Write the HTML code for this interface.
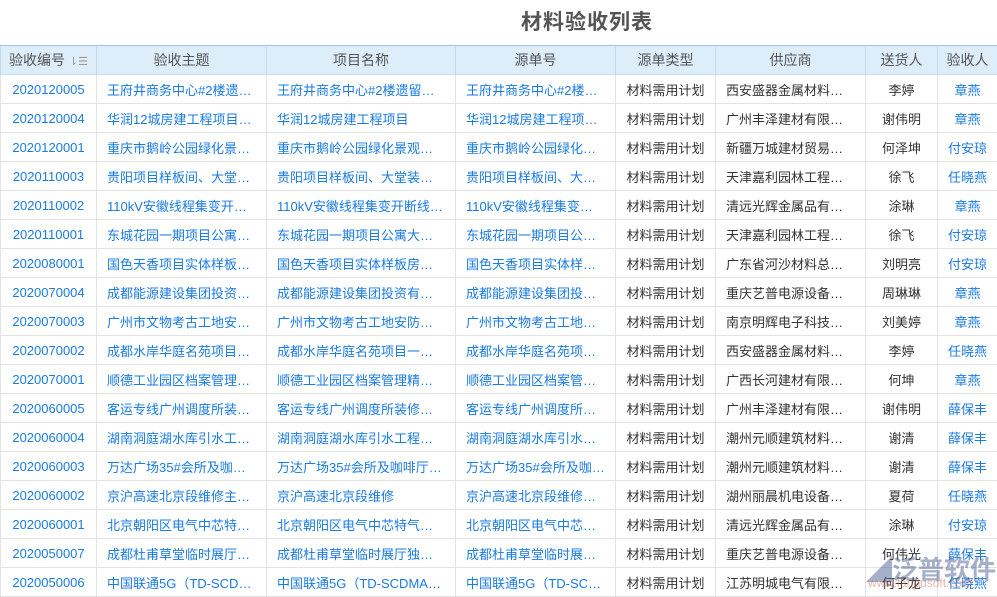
<!DOCTYPE html>
<html><head><meta charset="utf-8"><style>
body{margin:0;width:997px;height:595px;overflow:hidden;background:#fff;font-family:"Liberation Sans","Noto Sans CJK SC",sans-serif;position:relative}
.t{position:absolute;left:0;width:1174px;top:6px;text-align:center;font-size:21px;font-weight:bold;color:#555;letter-spacing:1px}
table{position:absolute;left:0;top:45px;border-collapse:collapse;table-layout:fixed;width:997px;font-size:13px}
th{background:#ddedfa;color:#555;font-weight:normal;font-size:14px;height:28px;border:1px solid #c4daee;border-top:1px solid #9cc5e8;padding:0}
td{height:28px;border:1px solid #e3e3e3;padding:0 10px;white-space:nowrap;overflow:hidden;text-overflow:ellipsis;color:#1a7be0}
td.c{text-align:center;padding:0}
td.k{color:#333}
.wm{position:absolute;left:866px;top:550px;font-size:26px;font-weight:bold;color:rgba(60,80,140,.45);white-space:nowrap}
.wm2{position:absolute;left:868px;top:576px;font-size:12px;color:rgba(200,90,60,.45);white-space:nowrap}
</style></head><body>
<div class="t">材料验收列表</div>
<table>
<colgroup><col style="width:96px"><col style="width:170px"><col style="width:189px"><col style="width:160px"><col style="width:100px"><col style="width:150px"><col style="width:72px"><col style="width:60px"></colgroup>
<tr><th>验收编号 <span style="color:#999;font-size:11px">⇂☰</span></th><th>验收主题</th><th>项目名称</th><th>源单号</th><th>源单类型</th><th>供应商</th><th>送货人</th><th>验收人</th></tr>
<tr><td class="c">2020120005</td><td>王府井商务中心#2楼遗留问题</td><td>王府井商务中心#2楼遗留问题处理</td><td>王府井商务中心#2楼遗留</td><td class="c k">材料需用计划</td><td class="k">西安盛器金属材料有限公司</td><td class="c k">李婷</td><td class="c">章燕</td></tr>
<tr><td class="c">2020120004</td><td>华润12城房建工程项目部工程</td><td>华润12城房建工程项目</td><td>华润12城房建工程项目部</td><td class="c k">材料需用计划</td><td class="k">广州丰泽建材有限公司</td><td class="c k">谢伟明</td><td class="c">章燕</td></tr>
<tr><td class="c">2020120001</td><td>重庆市鹅岭公园绿化景观工程</td><td>重庆市鹅岭公园绿化景观工程</td><td>重庆市鹅岭公园绿化景观</td><td class="c k">材料需用计划</td><td class="k">新疆万城建材贸易有限公司</td><td class="c k">何泽坤</td><td class="c">付安琼</td></tr>
<tr><td class="c">2020110003</td><td>贵阳项目样板间、大堂装修</td><td>贵阳项目样板间、大堂装修工程</td><td>贵阳项目样板间、大堂装修</td><td class="c k">材料需用计划</td><td class="k">天津嘉利园林工程有限公司</td><td class="c k">徐飞</td><td class="c">任晓燕</td></tr>
<tr><td class="c">2020110002</td><td>110kV安徽线程集变开关站</td><td>110kV安徽线程集变开断线路工程</td><td>110kV安徽线程集变开关站</td><td class="c k">材料需用计划</td><td class="k">清远光辉金属品有限公司</td><td class="c k">涂琳</td><td class="c">章燕</td></tr>
<tr><td class="c">2020110001</td><td>东城花园一期项目公寓楼工程</td><td>东城花园一期项目公寓大楼工程</td><td>东城花园一期项目公寓楼</td><td class="c k">材料需用计划</td><td class="k">天津嘉利园林工程有限公司</td><td class="c k">徐飞</td><td class="c">付安琼</td></tr>
<tr><td class="c">2020080001</td><td>国色天香项目实体样板房工程</td><td>国色天香项目实体样板房装修工程</td><td>国色天香项目实体样板房</td><td class="c k">材料需用计划</td><td class="k">广东省河沙材料总公司</td><td class="c k">刘明亮</td><td class="c">付安琼</td></tr>
<tr><td class="c">2020070004</td><td>成都能源建设集团投资有限</td><td>成都能源建设集团投资有限公司</td><td>成都能源建设集团投资有限</td><td class="c k">材料需用计划</td><td class="k">重庆艺普电源设备有限公司</td><td class="c k">周琳琳</td><td class="c">章燕</td></tr>
<tr><td class="c">2020070003</td><td>广州市文物考古工地安防工程</td><td>广州市文物考古工地安防系统工程</td><td>广州市文物考古工地安防</td><td class="c k">材料需用计划</td><td class="k">南京明辉电子科技有限公司</td><td class="c k">刘美婷</td><td class="c">章燕</td></tr>
<tr><td class="c">2020070002</td><td>成都水岸华庭名苑项目一期</td><td>成都水岸华庭名苑项目一期工程</td><td>成都水岸华庭名苑项目一期</td><td class="c k">材料需用计划</td><td class="k">西安盛器金属材料有限公司</td><td class="c k">李婷</td><td class="c">任晓燕</td></tr>
<tr><td class="c">2020070001</td><td>顺德工业园区档案管理系统</td><td>顺德工业园区档案管理精装修</td><td>顺德工业园区档案管理系统</td><td class="c k">材料需用计划</td><td class="k">广西长河建材有限公司</td><td class="c k">何坤</td><td class="c">章燕</td></tr>
<tr><td class="c">2020060005</td><td>客运专线广州调度所装修工程</td><td>客运专线广州调度所装修修缮</td><td>客运专线广州调度所装修</td><td class="c k">材料需用计划</td><td class="k">广州丰泽建材有限公司</td><td class="c k">谢伟明</td><td class="c">薛保丰</td></tr>
<tr><td class="c">2020060004</td><td>湖南洞庭湖水库引水工程施工</td><td>湖南洞庭湖水库引水工程施工</td><td>湖南洞庭湖水库引水工程</td><td class="c k">材料需用计划</td><td class="k">潮州元顺建筑材料有限公司</td><td class="c k">谢清</td><td class="c">薛保丰</td></tr>
<tr><td class="c">2020060003</td><td>万达广场35#会所及咖啡厅</td><td>万达广场35#会所及咖啡厅装修</td><td>万达广场35#会所及咖啡厅</td><td class="c k">材料需用计划</td><td class="k">潮州元顺建筑材料有限公司</td><td class="c k">谢清</td><td class="c">薛保丰</td></tr>
<tr><td class="c">2020060002</td><td>京沪高速北京段维修主线工程</td><td>京沪高速北京段维修</td><td>京沪高速北京段维修主线</td><td class="c k">材料需用计划</td><td class="k">湖州丽晨机电设备有限公司</td><td class="c k">夏荷</td><td class="c">任晓燕</td></tr>
<tr><td class="c">2020060001</td><td>北京朝阳区电气中芯特气工程</td><td>北京朝阳区电气中芯特气工程</td><td>北京朝阳区电气中芯特气</td><td class="c k">材料需用计划</td><td class="k">清远光辉金属品有限公司</td><td class="c k">涂琳</td><td class="c">付安琼</td></tr>
<tr><td class="c">2020050007</td><td>成都杜甫草堂临时展厅独立</td><td>成都杜甫草堂临时展厅独立工程</td><td>成都杜甫草堂临时展厅独立</td><td class="c k">材料需用计划</td><td class="k">重庆艺普电源设备有限公司</td><td class="c k">何伟光</td><td class="c">薛保丰</td></tr>
<tr><td class="c">2020050006</td><td>中国联通5G（TD-SCDMA）</td><td>中国联通5G（TD-SCDMA）基站</td><td>中国联通5G（TD-SCDMA）</td><td class="c k">材料需用计划</td><td class="k">江苏明城电气有限公司</td><td class="c k">何子龙</td><td class="c">任晓燕</td></tr>
</table>
<div class="wm">◢泛普软件</div>
<div class="wm2">www.fanpusoft.com</div>
</body></html>
